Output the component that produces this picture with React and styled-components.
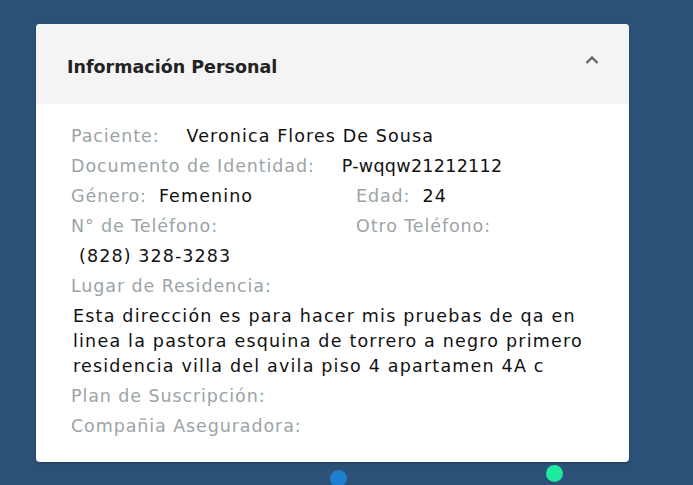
import React from "react";
import styled, { createGlobalStyle } from "styled-components";

const GlobalStyle = createGlobalStyle`
  html, body {
    margin: 0;
    padding: 0;
    background: #2b5177;
  }
  body {
    font-family: "DejaVu Sans", "Noto Sans", sans-serif;
  }
`;

const Page = styled.div`
  position: relative;
  width: 693px;
  height: 485px;
  overflow: hidden;
  background: #2b5177;
  padding: 24px 0 0 36px;
  box-sizing: border-box;
`;

const Card = styled.div`
  width: 593px;
  background: #fff;
  border-radius: 4px;
  overflow: hidden;
  box-shadow: 0 1px 3px rgba(0, 0, 0, 0.25);
`;

const Header = styled.div`
  height: 80px;
  background: #f4f4f4;
  display: flex;
  align-items: center;
  justify-content: space-between;
  padding: 0 30px 0 31px;
  box-sizing: border-box;
`;

const Title = styled.div`
  font-size: 17.5px;
  font-weight: 600;
  color: #222;
  padding-top: 5px;
`;

const Chevron = styled.svg`
  width: 14px;
  height: 10px;
  margin-bottom: 8px;
`;

const Body = styled.div`
  padding: 17px 35px 21px 35px;
  display: flex;
  flex-direction: column;
  font-size: 17.5px;
  letter-spacing: 0.9px;
`;

const Row = styled.div`
  display: grid;
  grid-template-columns: ${(p) => (p.$split ? "285px 1fr" : "1fr")};
  height: 30px;
  align-items: center;
`;

const Field = styled.div`
  display: flex;
  align-items: center;
  white-space: nowrap;
`;

const Label = styled.span`
  color: #9ba4a8;
`;

const Value = styled.span`
  color: #111;
  letter-spacing: ${(p) => p.$spacing ?? 1.1}px;
  margin-left: ${(p) => p.$gap || 12}px;
`;

const Address = styled.div`
  color: #111;
  line-height: 25px;
  padding: 3px 0 2px 2px;
  letter-spacing: 1.2px;
`;

const Dot = styled.div`
  position: absolute;
  width: 17px;
  height: 17px;
  border-radius: 50%;
  background: ${(p) => p.$color};
  left: ${(p) => p.$x}px;
  top: ${(p) => p.$y}px;
`;

export default function App() {
  return (
    <Page>
      <GlobalStyle />
      <Card>
        <Header>
          <Title>Información Personal</Title>
          <Chevron viewBox="0 0 14 10">
            <polyline
              points="1.5,8 7,2.5 12.5,8"
              fill="none"
              stroke="#666"
              strokeWidth="2.4"
            />
          </Chevron>
        </Header>
        <Body>
          <Row>
            <Field>
              <Label>Paciente:</Label>
              <Value $gap={27}>Veronica Flores De Sousa</Value>
            </Field>
          </Row>
          <Row>
            <Field>
              <Label>Documento de Identidad:</Label>
              <Value $gap={27} $spacing={0.3}>P-wqqw21212112</Value>
            </Field>
          </Row>
          <Row $split>
            <Field>
              <Label>Género:</Label>
              <Value>Femenino</Value>
            </Field>
            <Field>
              <Label>Edad:</Label>
              <Value>24</Value>
            </Field>
          </Row>
          <Row $split>
            <Field>
              <Label>N° de Teléfono:</Label>
            </Field>
            <Field>
              <Label>Otro Teléfono:</Label>
            </Field>
          </Row>
          <Row>
            <Field>
              <Value $gap={8}>(828) 328-3283</Value>
            </Field>
          </Row>
          <Row>
            <Field>
              <Label>Lugar de Residencia:</Label>
            </Field>
          </Row>
          <Address>
            Esta dirección es para hacer mis pruebas de qa en linea la pastora
            esquina de torrero a negro primero residencia villa del avila piso 4
            apartamen 4A c
          </Address>
          <Row>
            <Field>
              <Label>Plan de Suscripción:</Label>
            </Field>
          </Row>
          <Row>
            <Field>
              <Label>Compañia Aseguradora:</Label>
            </Field>
          </Row>
        </Body>
      </Card>
      <Dot $color="#1f7fcf" $x={330} $y={470} />
      <Dot $color="#1deaa0" $x={546} $y={465} />
    </Page>
  );
}
